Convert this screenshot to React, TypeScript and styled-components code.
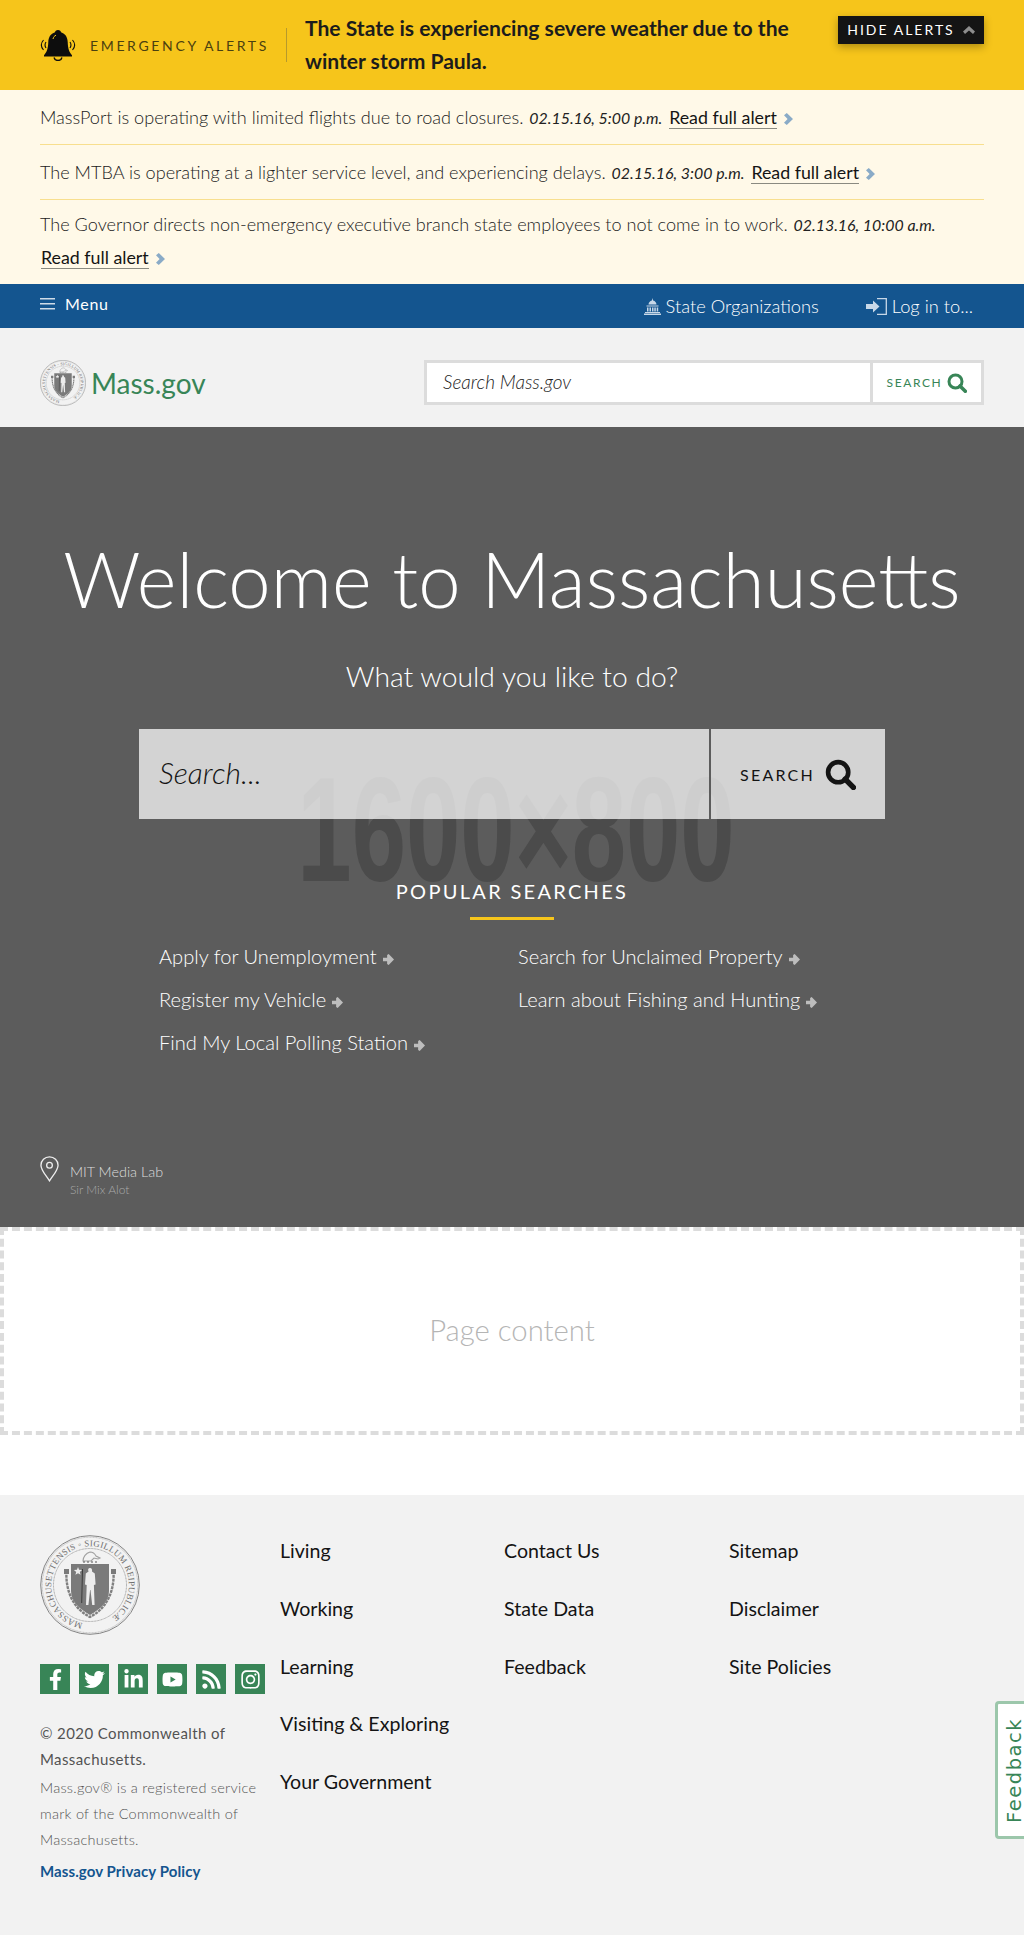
import React from "react";
import styled, { createGlobalStyle } from "styled-components";
import { FaFacebookF, FaTwitter, FaLinkedinIn, FaYoutube, FaRss, FaInstagram } from "react-icons/fa";

const Global = createGlobalStyle`
  html, body { margin: 0; padding: 0; background: #fff; }
  body { font-family: "Lato", "Noto Sans", sans-serif; color: #141414; }
  * { box-sizing: border-box; }
  a { color: inherit; text-decoration: none; }
`;

const Page = styled.div`position: relative; width: 1024px; height: 1935px; overflow: hidden;`;

const Banner = styled.section`
  height: 90px; background: #f6c51b; padding: 16px 40px 0; display: flex; align-items: flex-start;
`;
const BellWrap = styled.div`width: 36px; height: 32px; margin-top: 13px; flex: none;`;
const BannerLabel = styled.div`
  margin: 20px 0 0 14px; width: 176px; flex: none; font-size: 14px; line-height: 20px; font-weight: 400; letter-spacing: 2.65px; color: #4a4010; white-space: nowrap;
`;
const BannerDivider = styled.div`width: 1px; height: 34px; margin: 12px 18px 0 20px; background: #b79a2c; flex: none;`;
const BannerTitle = styled.h2`
  margin: -5px 0 0; width: 530px; flex: none; font-size: 21.1px; line-height: 33px; font-weight: 700; color: #1c1c1c;
`;
const HideButton = styled.button`
  margin-left: auto; margin-top: 0; width: 146px; height: 28px; border: 0; background: #141414; color: #fff; display: flex; align-items: center; justify-content: center; gap: 8px;
  font: 400 14px/28px "Lato", sans-serif; letter-spacing: 2px; box-shadow: 0 3px 8px rgba(0,0,0,.3); padding: 0;
`;

const AlertList = styled.div`background: #fff9e8; padding: 0 40px; height: 194px;`;
const AlertRow = styled.div<{ $top: number; $line?: boolean }>`
  padding: ${(p) => p.$top}px 0 ${(p) => 21 - p.$top}px; font-size: 18.1px; line-height: 33px; font-weight: 300; color: #222;
  border-bottom: ${(p) => (p.$line ? "1px solid #f8df8e" : "0")};
`;
const AlertDate = styled.em`font-size: 15.9px; font-style: italic; font-weight: 400; color: #222; margin: 0 1px;`;
const ReadLink = styled.a`
  display: inline-block; line-height: 22px; white-space: nowrap; font-weight: 400; font-size: 17.8px; color: #141414; border-bottom: 1px solid #8a8a80; margin-left: 1px;
`;
const Chev = styled.svg`width: 9px; height: 12px; margin-left: 7px; vertical-align: -1px;`;

const TopNav = styled.nav`height: 44px; background: #14558f; color: #fff; padding: 0 40px; display: flex; align-items: center;`;
const MenuBtn = styled.div`display: flex; align-items: center; gap: 10px; font-size: 16px; font-weight: 400; letter-spacing: .7px; margin-top: -5px;`;
const Burger = styled.svg`width: 15px; height: 12px;`;
const NavRight = styled.div`margin-left: auto; display: flex; align-items: center; margin-right: 11px;`;
const NavItem = styled.a`display: flex; align-items: center; gap: 5px; font-size: 18.3px; font-weight: 300; margin-left: 47px;`;

const Header = styled.header`height: 99px; background: #f2f2f2; padding: 32px 40px 0; display: flex; align-items: flex-start;`;
const Logo = styled.a`display: flex; align-items: center; gap: 5px; height: 46px; color: #388557; font-size: 28px; font-weight: 400;`;
const HeaderSearch = styled.div`margin-left: auto; width: 560px; height: 45px; border: 3px solid #dcdcdc; background: #fff; display: flex; margin-top: 0;`;
const HeaderInput = styled.div`flex: 1; padding-left: 16px; font-size: 19px; line-height: 38px; font-style: italic; font-weight: 300; color: #222;`;
const HeaderBtn = styled.div`width: 111px; border-left: 3px solid #dcdcdc; display: flex; align-items: center; justify-content: center; gap: 5px; color: #388557; font-size: 12px; font-weight: 400; letter-spacing: 1.6px;`;

const Hero = styled.section`position: relative; height: 800px; background: #5c5c5c; color: #fff; text-align: center; padding-top: 102px; overflow: hidden;`;
const Placeholder = styled.div`
  position: absolute; left: 298px; top: 338px; width: 436px; height: 130px; font: 700 148px/130px "Liberation Sans", sans-serif; color: #4b4b4b; white-space: nowrap;
  display: flex; justify-content: center; transform: scaleX(.66);
`;
const HeroTitle = styled.h1`position: relative; margin: 0; font-size: 76px; line-height: 100px; font-weight: 300;`;
const HeroSub = styled.p`position: relative; margin: 29px 0 0; font-size: 28.3px; line-height: 36px; font-weight: 300;`;
const HeroSearch = styled.div`position: relative; margin: 35px auto 0; width: 746px; height: 90px; background: rgba(255,255,255,.73); display: flex; color: #141414;`;
const HeroInput = styled.div`flex: 1; text-align: left; padding-left: 20px; font-size: 30px; line-height: 87px; font-style: italic; font-weight: 300;`;
const HeroBtn = styled.div`width: 176px; border-left: 2px solid #5c5c5c; display: flex; align-items: center; justify-content: center; gap: 10px; font-size: 16px; font-weight: 400; letter-spacing: 2.2px;`;
const PopularTitle = styled.h3`position: relative; margin: 59px 0 0; font-size: 20px; line-height: 26px; font-weight: 400; letter-spacing: 2.3px;`;
const YellowBar = styled.div`position: relative; width: 84px; height: 3px; background: #f6c51b; margin: 13px auto 0;`;
const PopularGrid = styled.div`position: relative; display: grid; grid-template-columns: 359px 1fr; grid-auto-rows: 43px; margin: 15px 0 0 159px; text-align: left;`;
const PopularLink = styled.a`font-size: 20.1px; line-height: 43px; font-weight: 300; white-space: nowrap;`;
const Arrow = styled.svg`width: 11px; height: 11px; margin-left: 6px; vertical-align: -1px;`;
const Credit = styled.div`position: absolute; left: 40px; top: 729px; display: flex; gap: 11px; text-align: left;`;
const CreditText = styled.div`padding-top: 6px;`;
const CreditTitle = styled.div`font-size: 14.4px; line-height: 20px; font-weight: 300; color: #ddd;`;
const CreditSub = styled.div`font-size: 12px; line-height: 16px; font-weight: 300; color: #aaa;`;

const PageContent = styled.section`height: 208px; border: 4px dashed #dcdcdc; background: #fff; display: flex; align-items: center; justify-content: center; font-size: 29.3px; font-weight: 300; color: #b5b5b5; padding-bottom: 4px;`;
const Spacer = styled.div`height: 60px; background: #fff;`;

const Footer = styled.footer`height: 440px; background: #f2f2f2; padding: 40px 40px 0; display: flex;`;
const FooterLeft = styled.div`width: 240px; flex: none;`;
const Socials = styled.div`display: flex; gap: 9px; margin-top: 26px;`;
const Social = styled.a`width: 30px; height: 30px; background: #388557; color: #fff; display: flex; align-items: center; justify-content: center; font-size: 21px;`;
const Copyright = styled.p`margin: 26px 0 0; font-size: 15px; line-height: 26px; font-weight: 400; letter-spacing: .4px; color: #535353;`;
const Legal = styled.p`margin: 3px 0 0; width: 225px; font-size: 14.5px; line-height: 26px; font-weight: 300; letter-spacing: .25px; color: #555;`;
const Privacy = styled.a`display: block; margin-top: 5px; font-size: 15px; line-height: 26px; font-weight: 700; letter-spacing: .1px; color: #14558f;`;
const FooterCols = styled.div`display: grid; grid-template-columns: 224px 225px 224px; margin-top: -13px;`;
const FooterCol = styled.ul`list-style: none; margin: 0; padding: 0;`;
const FooterItem = styled.li`font-size: 19.6px; line-height: 57.8px; color: #141414;`;

const Feedback = styled.a`
  position: absolute; right: -4px; top: 1701px; width: 33px; height: 138px; background: #fff; border: 3px solid #9cc7ab; border-radius: 4px; color: #388557; padding-left: 7px;
  display: flex; align-items: center; justify-content: center; writing-mode: vertical-rl; font: 400 19.5px/1 "DejaVu Sans", sans-serif; letter-spacing: 1.5px;
`;
const FeedbackLabel = styled.span`transform: rotate(180deg);`;

const Bell = () => (
  <svg viewBox="0 0 36 32" width="36" height="32">
    <path d="M18 1c1.800 0 3 1 3 2.300 4.400 1.400 6.500 5 6.700 9.700.2 6.500 1.500 10.300 4.300 13.200v1.300H4v-1.300C6.800 23.300 8.100 19.500 8.300 13c.2-4.700 2.300-8.300 6.700-9.700C15 2 16.200 1 18 1z" fill="#0d0d0d"/>
    <path d="M14 28.500c.5 2 2 3 4 3s3.500-1 4-3" fill="none" stroke="#0d0d0d" strokeWidth="1.300"/>
    <path d="M13 10c.5-2 1.500-3.200 3-3.800" fill="none" stroke="#f6c51b" strokeWidth="1"/>
    <path d="M3.500 11c-2.600 3-2.600 7 0 10M6 13c-1.300 2-1.300 4 0 6M32.500 11c2.600 3 2.600 7 0 10M30 13c1.300 2 1.300 4 0 6" fill="none" stroke="#0d0d0d" strokeWidth="1.100"/>
  </svg>
);
const Chevron = () => (
  <Chev viewBox="0 0 9 12"><path d="M0 2.200L2.800 0 9 6l-6.200 6L0 9.800 3.600 6z" fill="#8aabc7"/></Chev>
);
const ArrowIcon = () => (
  <Arrow viewBox="0 0 12 12"><path d="M0 4.200h4.500V1l1.700-1L12 6l-5.800 6-1.700-1V7.800H0z" fill="#bdbdbd"/></Arrow>
);
const SearchIcon = ({ size, color }: { size: number; color: string }) => (
  <svg viewBox="0 0 20 20" width={size} height={size}>
    <circle cx="8.500" cy="8.500" r="6.500" fill="none" stroke={color} strokeWidth="3"/>
    <path d="M13 13l5.300 5.300" stroke={color} strokeWidth="3.600" strokeLinecap="round"/>
  </svg>
);
const Capitol = () => (
  <svg viewBox="0 0 17 17" width="17" height="17" fill="#c8d8e8">
    <path d="M8.500 0l.6 2.500c2 .5 3.200 2 3.400 4H4.500c.2-2 1.400-3.500 3.400-4z"/>
    <path d="M2.500 7.500h12v1h-12zM3 9.500h1.500v4H3zM5.500 9.500H7v4H5.500zM8 9.500h1.500v4H8zM10.300 9.500h1.500v4h-1.500zM12.700 9.500h1.500v4h-1.500zM1 14h15v1H1zM0 15.500h17V17H0z"/>
  </svg>
);
const LoginIcon = () => (
  <svg viewBox="0 0 21 17" width="21" height="17">
    <path d="M0 6h7V2.500L13.500 8.500 7 14.500V11H0z" fill="#c8d8e8"/>
    <path d="M11 .7h9.300v15.600H11" fill="none" stroke="#c8d8e8" strokeWidth="1.300"/>
  </svg>
);
const PinIcon = () => (
  <svg viewBox="0 0 20 27" width="19" height="26">
    <path d="M10 26C5 18.500 1 14.500 1 9.500a9 8.800 0 0 1 18 0c0 5-4 9-9 16.500z" fill="none" stroke="#eee" strokeWidth="1.400"/>
    <circle cx="10" cy="9.500" r="3" fill="none" stroke="#eee" strokeWidth="1.400"/>
  </svg>
);
const Seal = ({ size, id }: { size: number; id: string }) => (
  <svg viewBox="0 0 100 100" width={size} height={size}>
    <circle cx="50" cy="50" r="49.300" fill="#f2f2f2" stroke="#858585" strokeWidth="1"/>
    <circle cx="50" cy="50" r="47.800" fill="none" stroke="#a8a8a8" strokeWidth=".7" strokeDasharray="1 .5"/>
    <circle cx="50" cy="50" r="36.500" fill="none" stroke="#9a9a9a" strokeWidth=".9" strokeDasharray="1 .5"/>
    <defs>
      <path id={id} d="M50 88.800a38.800 38.800 0 1 1 0-77.600a38.800 38.800 0 1 1 0 77.600"/>
    </defs>
    <text fontSize="8.800" fill="#6e6e6e" fontFamily="Liberation Serif, serif" letterSpacing=".35">
      <textPath href={`#${id}`} startOffset="3%">MASSACHUSETTENSIS ◦ SIGILLUM REIPUBLICÆ</textPath>
    </text>
    <path d="M31 29h38v27c0 11-9 18-19 24-10-6-19-13-19-24z" fill="#7a7a7a"/>
    <path d="M50 33c2 0 2.300 2 2 3.500l2.800 2 .8 11-1.700.5.700 20h-2.400l-1.700-15h-.4l-1.700 15h-2.400l.7-20-1.700-.5.800-11 2.800-2C47.700 35 48 33 50 33z" fill="#ececec"/>
    <path d="M42.500 34l-.8 34" stroke="#1f1f1f" strokeWidth=".7"/>
    <path d="M38 32l1.100 2.800 3 .2-2.300 1.900.8 2.900L38 38.200l-2.600 1.600.8-2.900-2.300-1.900 3-.2z" fill="#ececec"/>
    <path d="M43 26c0-4 3-8 7-9 3 0 5 2 6 4l4 2-2 1-4-1-3 3z" fill="none" stroke="#9f9f9f" strokeWidth="1.100"/>
    <path d="M43 27h16" stroke="#555" strokeWidth="1.200" strokeDasharray="2 2"/>
    <path d="M26.500 36c-1 16 4 36 23.500 46 19.500-10 24.500-30 23.500-46" fill="none" stroke="#808080" strokeWidth="2.400" strokeDasharray="3 .8"/>
    <path d="M24 34h5v5h-5zM71 34h5v5h-5z" fill="#7a7a7a"/>
  </svg>
);

const popular = [
  "Apply for Unemployment", "Search for Unclaimed Property",
  "Register my Vehicle", "Learn about Fishing and Hunting",
  "Find My Local Polling Station",
];
const footerCols = [
  ["Living", "Working", "Learning", "Visiting & Exploring", "Your Government"],
  ["Contact Us", "State Data", "Feedback"],
  ["Sitemap", "Disclaimer", "Site Policies"],
];

export default function App() {
  return (
    <Page>
      <Global />
      <Banner>
        <BellWrap><Bell /></BellWrap>
        <BannerLabel>EMERGENCY ALERTS</BannerLabel>
        <BannerDivider />
        <BannerTitle>The State is experiencing severe weather due to the winter storm Paula.</BannerTitle>
        <HideButton>
          HIDE ALERTS
          <svg viewBox="0 0 12 8" width="12" height="8"><path d="M6 0l6 5.500L10 8 6 4.500 2 8 0 5.500z" fill="#8d8d8d"/></svg>
        </HideButton>
      </Banner>
      <AlertList>
        <AlertRow $top={10.5} $line>
          MassPort is operating with limited flights due to road closures. <AlertDate>02.15.16, 5:00 p.m.</AlertDate> <ReadLink>Read full alert</ReadLink><Chevron />
        </AlertRow>
        <AlertRow $top={10.5} $line>
          The MTBA is operating at a lighter service level, and experiencing delays. <AlertDate>02.15.16, 3:00 p.m.</AlertDate> <ReadLink>Read full alert</ReadLink><Chevron />
        </AlertRow>
        <AlertRow $top={8}>
          The Governor directs non-emergency executive branch state employees to not come in to work. <AlertDate>02.13.16, 10:00 a.m.</AlertDate> <ReadLink>Read full alert</ReadLink><Chevron />
        </AlertRow>
      </AlertList>
      <TopNav>
        <MenuBtn>
          <Burger viewBox="0 0 15 12"><path d="M0 0h15v1.600H0zM0 5h15v1.600H0zM0 10h15v1.600H0z" fill="#cfdce8"/></Burger>
          Menu
        </MenuBtn>
        <NavRight>
          <NavItem><Capitol />State Organizations</NavItem>
          <NavItem><LoginIcon />Log in to...</NavItem>
        </NavRight>
      </TopNav>
      <Header>
        <Logo><Seal size={46} id="seal-small" />Mass.gov</Logo>
        <HeaderSearch>
          <HeaderInput>Search Mass.gov</HeaderInput>
          <HeaderBtn>SEARCH<SearchIcon size={20} color="#388557" /></HeaderBtn>
        </HeaderSearch>
      </Header>
      <Hero>
        <Placeholder>1600×800</Placeholder>
        <HeroTitle>Welcome to Massachusetts</HeroTitle>
        <HeroSub>What would you like to do?</HeroSub>
        <HeroSearch>
          <HeroInput>Search...</HeroInput>
          <HeroBtn>SEARCH<SearchIcon size={31} color="#141414" /></HeroBtn>
        </HeroSearch>
        <PopularTitle>POPULAR SEARCHES</PopularTitle>
        <YellowBar />
        <PopularGrid>
          {popular.map((t) => <PopularLink key={t}>{t}<ArrowIcon /></PopularLink>)}
        </PopularGrid>
        <Credit>
          <PinIcon />
          <CreditText>
            <CreditTitle>MIT Media Lab</CreditTitle>
            <CreditSub>Sir Mix Alot</CreditSub>
          </CreditText>
        </Credit>
      </Hero>
      <PageContent>Page content</PageContent>
      <Spacer />
      <Footer>
        <FooterLeft>
          <Seal size={100} id="seal-large" />
          <Socials>
            <Social><FaFacebookF /></Social>
            <Social><FaTwitter /></Social>
            <Social><FaLinkedinIn /></Social>
            <Social><FaYoutube /></Social>
            <Social><FaRss /></Social>
            <Social><FaInstagram /></Social>
          </Socials>
          <Copyright>© 2020 Commonwealth of Massachusetts.</Copyright>
          <Legal>Mass.gov® is a registered service mark of the Commonwealth of Massachusetts.</Legal>
          <Privacy>Mass.gov Privacy Policy</Privacy>
        </FooterLeft>
        <FooterCols>
          {footerCols.map((c, i) => (
            <FooterCol key={i}>{c.map((t) => <FooterItem key={t}>{t}</FooterItem>)}</FooterCol>
          ))}
        </FooterCols>
      </Footer>
      <Feedback><FeedbackLabel>Feedback</FeedbackLabel></Feedback>
    </Page>
  );
}
